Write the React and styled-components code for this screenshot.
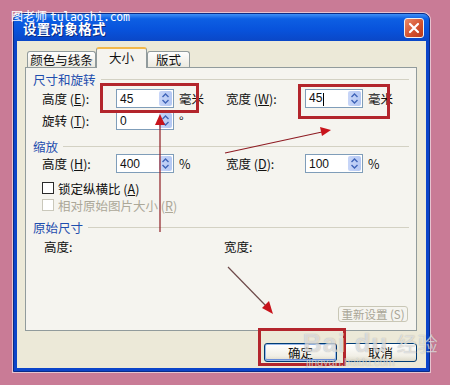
import React from 'react'
import styled, { createGlobalStyle, css } from 'styled-components'

const GlobalStyle = createGlobalStyle`
  html, body { margin: 0; padding: 0; }
  body {
    background: #c97b96;
    font-family: "Noto Sans CJK SC", "DejaVu Sans", sans-serif;
    font-size: 12px;
    color: #111;
  }
`

const Stage = styled.div`
  position: relative;
  width: 450px;
  height: 385px;
  overflow: hidden;
  box-sizing: border-box;
  padding: 13px 0 0 13px;
`

const Dialog = styled.div`
  position: relative;
  width: 417px;
  height: 359px;
  box-sizing: border-box;
  border: 1px solid #0a2a86;
  border-radius: 7px 7px 0 0;
  background: #0b44c9;
  box-shadow: 0 0 0 1px rgba(255,255,255,0.55);
  display: flex;
  flex-direction: column;
`

const TitleBar = styled.div`
  height: 27px;
  border-radius: 6px 6px 0 0;
  background: linear-gradient(#3f8ff4 0%, #0d5fe3 18%, #0852db 60%, #0a47c7 100%);
  display: flex;
  align-items: center;
  justify-content: space-between;
  padding: 0 5px 0 9px;
`

const Title = styled.div`
  color: #fff;
  font-weight: 700;
  font-size: 13.5px;
  letter-spacing: 0.3px;
  text-shadow: 1px 1px 0 #0a2a80;
`

const CloseButton = styled.div`
  width: 20px;
  height: 20px;
  box-sizing: border-box;
  border: 1px solid #f4f0ee;
  border-radius: 3px;
  background: linear-gradient(135deg, #eb8a68, #d24e2b 60%, #b83a1c);
  display: flex;
  align-items: center;
  justify-content: center;
`

const Body = styled.div`
  flex: 1;
  margin: 0 3px 3px 3px;
  background: #ece9d8;
  padding: 6px 9px 0 8px;
  display: flex;
  flex-direction: column;
`

const TabRow = styled.div`
  display: flex;
  align-items: flex-end;
  height: 20px;
  padding-left: 2px;
  position: relative;
  z-index: 1;
`

const Tab = styled.div`
  box-sizing: border-box;
  width: ${p => p.w}px;
  height: ${p => (p.active ? 21 : 16)}px;
  border: 1px solid #919b9c;
  border-bottom: none;
  border-radius: 3px 3px 0 0;
  font-size: 12.5px;
  display: flex;
  align-items: center;
  justify-content: center;
  ${p => p.active
    ? css`
        background: #f5f4ef;
        border-top: 2px solid #f2b84a;
        margin-bottom: -1px;
        padding-bottom: 2px;
      `
    : css`
        background: linear-gradient(#fefefe, #eceae0);
      `}
`

const Panel = styled.div`
  box-sizing: border-box;
  height: 264px;
  border: 1px solid #919b9c;
  background: #f5f4ef;
  padding: 4px 7px 8px 7px;
  display: flex;
  flex-direction: column;
`

const GroupHeader = styled.div`
  display: flex;
  align-items: center;
  height: 14px;
  margin-top: ${p => p.mt || 0}px;
  color: #1f4eae;
  font-size: 12.5px;
  &::after {
    content: '';
    flex: 1;
    height: 1px;
    margin-left: 5px;
    background: #d3d1c3;
  }
`

const Row = styled.div`
  display: flex;
  align-items: center;
  height: 19px;
  margin-top: ${p => p.mt || 0}px;
  padding-left: 9px;
`

const Half = styled.div`
  display: flex;
  align-items: center;
  width: ${p => p.w}px;
`

const Label = styled.div`
  width: ${p => p.w}px;
  font-size: 12.5px;
  white-space: nowrap;
  u { text-decoration: underline; }
`

const Field = styled.div`
  box-sizing: border-box;
  width: ${p => p.w || 58}px;
  height: 19px;
  border: 1px solid #7f9db9;
  background: #fff;
  display: flex;
  align-items: center;
  justify-content: space-between;
  padding: 0 1px 0 3px;
  font-family: "Liberation Sans", sans-serif;
  font-size: 12px;
`

const Caret = styled.span`
  display: inline-block;
  width: 1px;
  height: 13px;
  background: #000;
  vertical-align: middle;
  margin-left: 1px;
`

const Spin = styled.div`
  width: 13px;
  height: 15px;
  border-radius: 2px;
  background: linear-gradient(90deg, #c8d6f8, #b5c8f3);
  display: flex;
  align-items: center;
  justify-content: center;
`

const Unit = styled.div`
  margin-left: 5px;
  font-size: 12.5px;
`

const CheckRow = styled.div`
  display: flex;
  align-items: center;
  height: 14px;
  margin-top: ${p => p.mt}px;
  padding-left: 9px;
  gap: 4px;
  color: ${p => (p.disabled ? '#aca899' : '#111')};
  font-size: 12.5px;
`

const Box = styled.div`
  box-sizing: border-box;
  width: 12px;
  height: 12px;
  border: 1px solid ${p => (p.disabled ? '#cac8bb' : '#2a2a2a')};
  background: #fff;
`

const InfoRow = styled.div`
  display: flex;
  align-items: center;
  height: 14px;
  margin-top: 5px;
  padding-left: 11px;
  font-size: 12.5px;
`

const ResetButton = styled.div`
  margin-top: auto;
  align-self: flex-end;
  margin-right: 1px;
  width: 70px;
  height: 16px;
  box-sizing: border-box;
  border: 1px solid #c9c7b6;
  border-radius: 3px;
  color: #a9a596;
  font-size: 11.5px;
  display: flex;
  align-items: center;
  justify-content: center;
`

const ButtonRow = styled.div`
  display: flex;
  justify-content: flex-end;
  gap: 7px;
  margin-top: 12px;
`

const Button = styled.div`
  box-sizing: border-box;
  width: 73px;
  height: 19px;
  border: 1px solid #003c74;
  border-radius: 3px;
  background: linear-gradient(#ffffff, #f1efe6 70%, #dcd8c8);
  font-size: 12.5px;
  display: flex;
  align-items: center;
  justify-content: center;
  ${p => p.focus && css`
    box-shadow: inset 0 0 0 1px #98b8ea, inset 0 -1px 0 1px #6d8fd8;
  `}
`

const Mark = styled.div`
  position: absolute;
  left: ${p => p.x}px;
  top: ${p => p.y}px;
  width: ${p => p.w}px;
  height: ${p => p.h}px;
  box-sizing: border-box;
  border: 3px solid #b3252c;
`

const Overlay = styled.svg`
  position: absolute;
  left: 0;
  top: 0;
  pointer-events: none;
`

const Watermark = styled.div`
  position: absolute;
  left: 11px;
  top: 9px;
  color: #fff;
  font-size: 12px;
  line-height: 14px;
  white-space: nowrap;
  span {
    font-family: "DejaVu Sans Mono", monospace;
    font-size: 11.5px;
    margin-left: 3px;
    letter-spacing: -0.3px;
  }
`

const BaiduMark = styled.div`
  position: absolute;
  left: 303px;
  top: 330px;
  color: rgba(255, 255, 255, 0.6);
  text-shadow: 0 0 1px rgba(90, 90, 90, 0.5);
  display: flex;
  flex-direction: column;
  line-height: 1;
`

const BaiduTop = styled.div`
  font-family: "Liberation Sans", sans-serif;
  font-weight: 700;
  font-size: 26px;
  letter-spacing: 1px;
  small {
    font-family: "Noto Sans CJK SC", sans-serif;
    font-size: 20px;
    font-weight: 400;
  }
`

const BaiduSub = styled.div`
  font-family: "Liberation Sans", sans-serif;
  font-size: 11px;
  margin-top: 1px;
  margin-left: 3px;
`

const Spinner = () => (
  <Spin>
    <svg width="9" height="13" viewBox="0 0 9 13">
      <path d="M1.5 5 L4.5 2 L7.5 5" fill="none" stroke="#3f64b8" strokeWidth="1.4" />
      <path d="M1.5 8 L4.5 11 L7.5 8" fill="none" stroke="#3f64b8" strokeWidth="1.4" />
    </svg>
  </Spin>
)

const NumField = ({ value, caret }) => (
  <Field>
    <span>{value}{caret && <Caret />}</span>
    <Spinner />
  </Field>
)

const App = () => (
  <>
    <GlobalStyle />
    <Stage>
      <Dialog>
        <TitleBar>
          <Title>设置对象格式</Title>
          <CloseButton>
            <svg width="12" height="12" viewBox="0 0 12 12">
              <path d="M2 2 L10 10 M10 2 L2 10" stroke="#fff" strokeWidth="2.2" strokeLinecap="round" />
            </svg>
          </CloseButton>
        </TitleBar>

        <Body>
          <TabRow>
            <Tab w={69}>颜色与线条</Tab>
            <Tab w={51} active>大小</Tab>
            <Tab w={43}>版式</Tab>
          </TabRow>

          <Panel>
            <GroupHeader>尺寸和旋转</GroupHeader>
            <Row mt={3}>
              <Half w={184}>
                <Label w={74}>高度 (<u>E</u>):</Label>
                <NumField value="45" />
                <Unit>毫米</Unit>
              </Half>
              <Half>
                <Label w={79}>宽度 (<u>W</u>):</Label>
                <NumField value="45" caret />
                <Unit>毫米</Unit>
              </Half>
            </Row>
            <Row mt={3}>
              <Half w={184}>
                <Label w={74}>旋转 (<u>T</u>):</Label>
                <NumField value="0" />
                <Unit>°</Unit>
              </Half>
            </Row>

            <GroupHeader mt={9}>缩放</GroupHeader>
            <Row mt={1}>
              <Half w={184}>
                <Label w={74}>高度 (<u>H</u>):</Label>
                <NumField value="400" />
                <Unit>%</Unit>
              </Half>
              <Half>
                <Label w={79}>宽度 (<u>D</u>):</Label>
                <NumField value="100" />
                <Unit>%</Unit>
              </Half>
            </Row>
            <CheckRow mt={8}>
              <Box />
              <span>锁定纵横比 (<u>A</u>)</span>
            </CheckRow>
            <CheckRow mt={3} disabled>
              <Box disabled />
              <span>相对原始图片大小 (<u>R</u>)</span>
            </CheckRow>

            <GroupHeader mt={8}>原始尺寸</GroupHeader>
            <InfoRow>
              <Half w={180}>高度:</Half>
              <span>宽度:</span>
            </InfoRow>

            <ResetButton>重新设置 (S)</ResetButton>
          </Panel>

          <ButtonRow>
            <Button focus>确定</Button>
            <Button>取消</Button>
          </ButtonRow>
        </Body>
      </Dialog>

      <Mark x={100} y={83} w={99} h={30} />
      <Mark x={298} y={84} w={92} h={35} />
      <Mark x={258} y={328} w={88} h={38} />

      <Overlay width="450" height="385" viewBox="0 0 450 385">
        <line x1="160" y1="232" x2="160" y2="122" stroke="#8e1b22" strokeWidth="1.2" />
        <path d="M160 114 L155 125 L165 125 Z" fill="#c8141c" />
        <line x1="225" y1="153" x2="322" y2="132" stroke="#8e1b22" strokeWidth="1.2" />
        <path d="M331 130 L320 127 L322 136 Z" fill="#c8141c" />
        <line x1="228" y1="267" x2="267" y2="307" stroke="#6e4a4a" strokeWidth="1.2" />
        <path d="M273 314 L262 308 L269 301 Z" fill="#c8141c" />
      </Overlay>

      <Watermark>图老师<span>tulaoshi.com</span></Watermark>
      <BaiduMark>
        <BaiduTop>Bai du <small>经验</small></BaiduTop>
        <BaiduSub>jingyan.baidu.com</BaiduSub>
      </BaiduMark>
    </Stage>
  </>
)

export default App
